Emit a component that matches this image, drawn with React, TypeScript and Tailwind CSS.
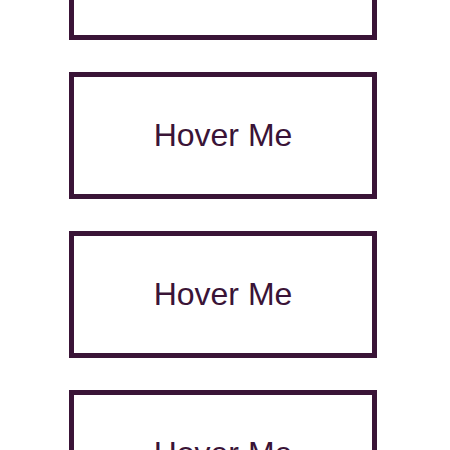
export default function App() {
  const items = [0, 1, 2, 3];
  return (
    <div className="min-h-screen overflow-hidden bg-white">
      <div className="-mt-[86.8px] ml-[69px] flex w-[308px] flex-col gap-8">
        {items.map((i) => (
          <button
            key={i}
            className="border-[5px] border-[#3a1437] bg-white py-10 text-center font-['Liberation_Sans',Arial,sans-serif] text-[32px] leading-[normal] text-[#3a1437]"
          >
            Hover Me
          </button>
        ))}
      </div>
    </div>
  );
}
